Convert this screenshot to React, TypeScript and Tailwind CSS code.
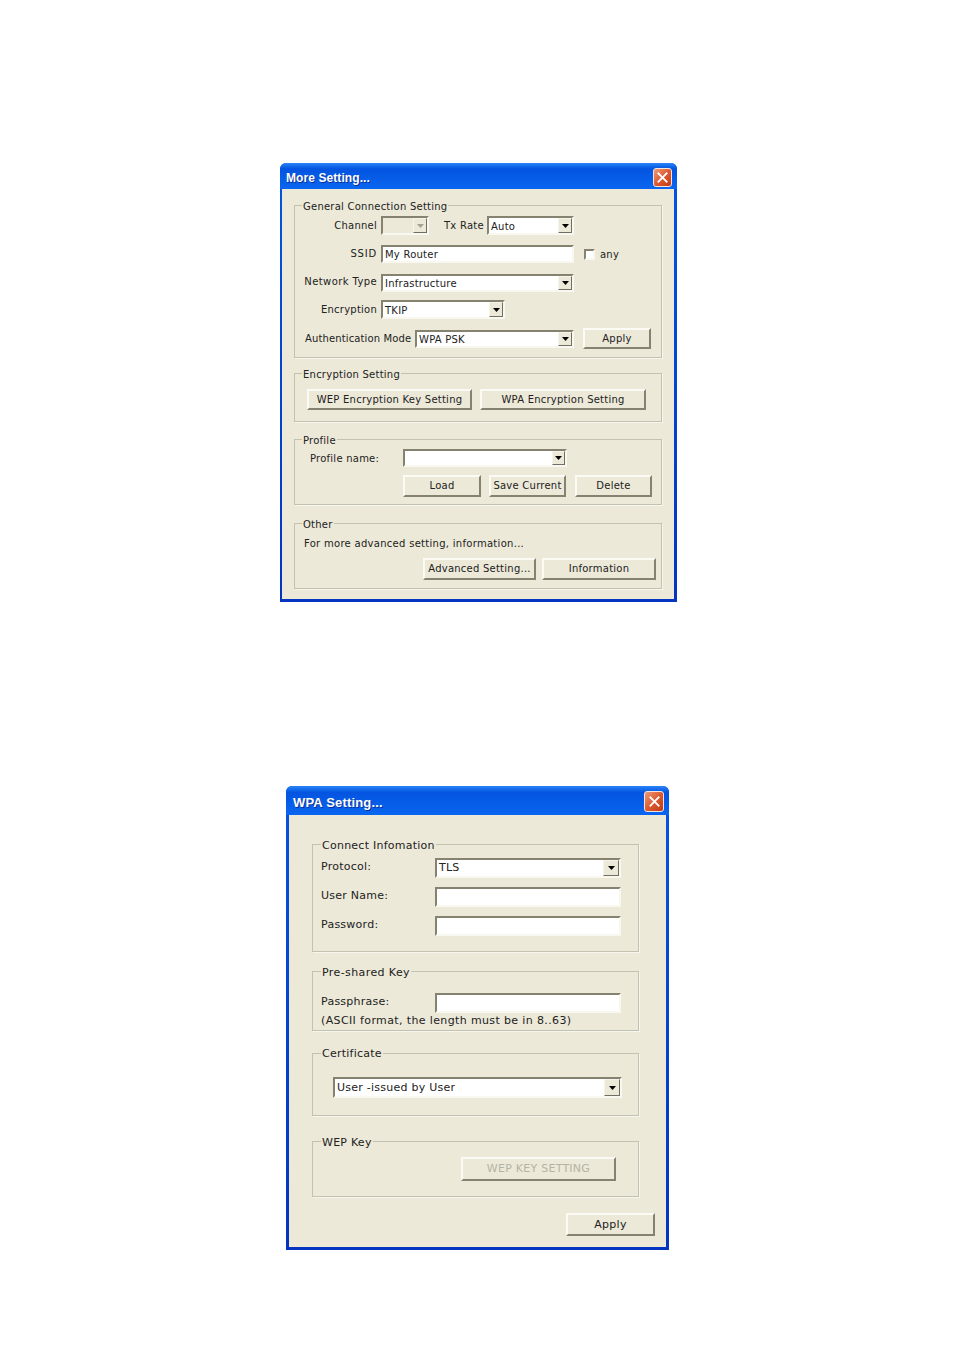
import React from 'react';

const sunken = 'border-2 border-t-[#85826f] border-l-[#85826f] border-b-[#f8f7f0] border-r-[#f8f7f0]';
const raised = 'border-2 border-t-[#fbfaf5] border-l-[#fbfaf5] border-b-[#85826f] border-r-[#85826f]';

const TitleBar: React.FC<{ title: string; textClass: string; height: string; closeClass: string }> = ({ title, textClass, height, closeClass }) => (
  <div className={`flex items-center justify-between rounded-t-[6px] bg-gradient-to-b from-[#2a84f8] from-[0%] via-[#0454e0] via-[22%] to-[#0a66f0] pt-[2px] ${height}`}>
    <span className={`pt-[2px] font-bold text-white [font-family:'Liberation_Sans',sans-serif] [text-shadow:1px_1px_0_#0a2f9c] ${textClass}`}>{title}</span>
    <div className={`flex items-center justify-center rounded-[3px] border border-[#f4e4dc] bg-gradient-to-br from-[#ec9a78] via-[#dd5a30] to-[#c03a10] ${closeClass}`}>
      <svg viewBox="0 0 12 12" className="h-[11px] w-[11px]">
        <path d="M1.5 1.5 L10.5 10.5 M10.5 1.5 L1.5 10.5" stroke="#fff" strokeWidth="2" strokeLinecap="square" />
      </svg>
    </div>
  </div>
);

const Group: React.FC<{ legend: string; className: string; legendClass: string; children?: React.ReactNode }> = ({ legend, className, legendClass, children }) => (
  <div className={`relative border border-[#c3c1b0] shadow-[1px_1px_0_#f7f6ee] ${className}`}>
    <span className={`absolute bg-[#ece9d8] px-[1px] leading-none ${legendClass}`}>{legend}</span>
    {children}
  </div>
);

const Arrow: React.FC<{ disabled?: boolean; width: string }> = ({ disabled, width }) => (
  <div className={`flex h-full shrink-0 items-center justify-center bg-[#ece9d8] border border-t-[#f6f5ec] border-l-[#f6f5ec] border-b-[#716f64] border-r-[#716f64] ${width}`}>
    <svg viewBox="0 0 7 4" className="h-[4px] w-[7px]">
      <path d="M0 0 H7 L3.5 4 Z" fill={disabled ? '#a5a397' : '#000'} />
    </svg>
  </div>
);

const Combo: React.FC<{ value?: string; className: string; disabled?: boolean; arrowWidth?: string; textClass?: string }> = ({
  value,
  className,
  disabled,
  arrowWidth = 'w-[14px]',
  textClass = 'pl-[2px] pt-[1px]',
}) => (
  <div className={`flex items-center justify-between ${sunken} ${disabled ? 'bg-[#ece9d8]' : 'bg-white'} ${className}`}>
    <span className={`truncate ${textClass}`}>{value}</span>
    <Arrow disabled={disabled} width={arrowWidth} />
  </div>
);

const Field: React.FC<{ value?: string; className: string }> = ({ value, className }) => (
  <div className={`flex items-center bg-white pl-[2px] ${sunken} ${className}`}>{value}</div>
);

const Btn: React.FC<{ label: string; className: string; disabled?: boolean }> = ({ label, className, disabled }) => (
  <button className={`flex shrink-0 items-center justify-center whitespace-nowrap bg-[#ece9d8] ${raised} ${disabled ? 'text-[#b5b3a6]' : ''} ${className}`}>
    {label}
  </button>
);

const MoreSetting: React.FC = () => (
  <div className="ml-[280px] mt-[163px] h-[439px] w-[397px] rounded-t-[6px] bg-gradient-to-b from-[#0454e0] to-[#0434c0] text-[10px] tracking-[0.24px] text-[#222] [font-family:'DejaVu_Sans',sans-serif]">
    <TitleBar
      title="More Setting..."
      height="h-[26px] pl-[6px] pr-[5px]"
      textClass="text-[12px] tracking-[0.08px]"
      closeClass="h-[19px] w-[19px]"
    />
    <div className="ml-[2px] mr-[3px] flex h-[410px] flex-col bg-[#ece9d8] pl-[12px] pt-[16px]">
      <Group legend="General Connection Setting" className="h-[153px] w-[368px] pt-[10px]" legendClass="left-[7px] top-[-4px]">
        <div className="flex h-[19px] items-center">
          <span className="w-[82px] pb-[1px] text-right">Channel</span>
          <Combo disabled className="ml-[4px] h-full w-[48px]" />
          <span className="ml-[15px] w-[40px] whitespace-nowrap pb-[1px]">Tx Rate</span>
          <Combo value="Auto" className="ml-[3px] h-full w-[87px]" />
        </div>
        <div className="mt-[10px] flex h-[18px] items-center">
          <span className="w-[82px] pb-[2px] text-right tracking-[0.8px]">SSID</span>
          <Field value="My Router" className="ml-[4px] h-full w-[193px]" />
          <div className={`ml-[10px] h-[11px] w-[11px] bg-white ${sunken} border`} />
          <span className="ml-[5px]">any</span>
        </div>
        <div className="mt-[11px] flex h-[18px] items-center">
          <span className="w-[82px] whitespace-nowrap pb-[3px] text-right tracking-[0.4px]">Network Type</span>
          <Combo value="Infrastructure" className="ml-[4px] h-full w-[193px]" />
        </div>
        <div className="mt-[8px] flex h-[19px] items-center">
          <span className="w-[82px] pb-[1px] text-right">Encryption</span>
          <Combo value="TKIP" className="ml-[4px] h-full w-[124px]" />
        </div>
        <div className="mt-[9px] flex h-[21px] items-center pl-[10px]">
          <span className="w-[106px] whitespace-nowrap tracking-[0.13px]">Authentication Mode</span>
          <Combo value="WPA PSK" className="ml-[4px] h-[18px] w-[159px]" />
          <Btn label="Apply" className="ml-[9px] h-full w-[68px]" />
        </div>
      </Group>

      <Group legend="Encryption Setting" className="mt-[15px] flex h-[49px] w-[368px] items-start pl-[12px] pt-[15px]" legendClass="left-[7px] top-[-4px]">
        <Btn label="WEP Encryption Key Setting" className="h-[21px] w-[165px]" />
        <Btn label="WPA Encryption Setting" className="ml-[8px] h-[21px] w-[166px]" />
      </Group>

      <Group legend="Profile" className="mt-[17px] h-[66px] w-[368px] pt-[9px]" legendClass="left-[7px] top-[-4px]">
        <div className="flex h-[18px] items-center">
          <span className="ml-[15px] w-[93px]">Profile name:</span>
          <Combo className="h-full w-[164px]" arrowWidth="w-[13px]" />
        </div>
        <div className="ml-[108px] mt-[8px] flex h-[22px]">
          <Btn label="Load" className="h-full w-[78px] pb-[1px]" />
          <Btn label="Save Current" className="ml-[8px] h-full w-[77px] pb-[1px]" />
          <Btn label="Delete" className="ml-[9px] h-full w-[77px] pb-[1px]" />
        </div>
      </Group>

      <Group legend="Other" className="mt-[18px] h-[66px] w-[368px] pt-[13px]" legendClass="left-[7px] top-[-4px]">
        <div className="ml-[9px] h-[13px] leading-[13px] tracking-[0.29px]">For more advanced setting, information...</div>
        <div className="ml-[128px] mt-[8px] flex h-[22px]">
          <Btn label="Advanced Setting..." className="h-full w-[113px] pb-[1px]" />
          <Btn label="Information" className="ml-[6px] h-full w-[114px] pb-[1px]" />
        </div>
      </Group>
    </div>
  </div>
);

const WpaSetting: React.FC = () => (
  <div className="ml-[286px] mt-[184px] h-[464px] w-[383px] rounded-t-[6px] bg-gradient-to-b from-[#0454e0] to-[#0434c0] text-[11px] tracking-[0.25px] text-[#222] [font-family:'DejaVu_Sans',sans-serif]">
    <TitleBar
      title="WPA Setting..."
      height="h-[29px] pl-[7px] pr-[5px]"
      textClass="text-[13px] tracking-[0.17px]"
      closeClass="h-[21px] w-[20px]"
    />
    <div className="mx-[3px] flex h-[432px] flex-col bg-[#ece9d8] pl-[23px] pt-[29px]">
      <Group legend="Connect Infomation" className="h-[108px] w-[327px] pt-[14px]" legendClass="left-[8px] top-[-5px]">
        <div className="-mt-px flex h-[20px]">
          <span className="ml-[8px] w-[114px] pt-[1px]">Protocol:</span>
          <Combo value="TLS" className="h-full w-[186px]" arrowWidth="w-[16px]" />
        </div>
        <div className="mt-[9px] flex h-[20px]">
          <span className="ml-[8px] w-[114px] pt-[1px]">User Name:</span>
          <Field className="h-full w-[186px]" />
        </div>
        <div className="mt-[9px] flex h-[20px]">
          <span className="ml-[8px] w-[114px] pt-[1px]">Password:</span>
          <Field className="h-full w-[186px]" />
        </div>
      </Group>

      <Group legend="Pre-shared Key" className="mt-[19px] h-[60px] w-[327px] pt-[21px]" legendClass="left-[8px] top-[-5px] tracking-[0.4px]">
        <div className="flex h-[20px] items-center">
          <span className="ml-[8px] w-[114px] pb-[2px]">Passphrase:</span>
          <Field className="h-full w-[186px]" />
        </div>
        <div className="ml-[8px] h-[14px] whitespace-nowrap pt-[1px] leading-[14px] tracking-[0.37px]">(ASCII format, the length must be in 8..63)</div>
      </Group>

      <Group legend="Certificate" className="mt-[22px] h-[63px] w-[327px] pl-[20px] pt-[23px]" legendClass="left-[8px] top-[-6px]">
        <Combo value="User -issued by User" className="h-[21px] w-[289px]" arrowWidth="w-[16px]" />
      </Group>

      <Group legend="WEP Key" className="mt-[25px] h-[56px] w-[327px] pl-[148px] pt-[15px]" legendClass="left-[8px] top-[-5px]">
        <Btn disabled label="WEP KEY SETTING" className="h-[24px] w-[155px]" />
      </Group>

      <div className="mt-[16px] flex w-[343px] justify-end">
        <Btn label="Apply" className="h-[23px] w-[89px] pt-[1px]" />
      </div>
    </div>
  </div>
);

const App: React.FC = () => (
  <div className="h-[1351px] w-[954px] overflow-hidden bg-white pt-px">
    <div className="-mt-px">
      <MoreSetting />
      <WpaSetting />
    </div>
  </div>
);

export default App;
